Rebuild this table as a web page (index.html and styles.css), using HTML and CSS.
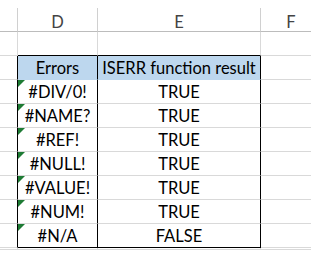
FILE: index.html
```html
<!DOCTYPE html>
<html>
<head>
<meta charset="utf-8">
<link rel="stylesheet" href="styles.css">
</head>
<body>
<div class="sheet">
  <div class="hdr corner"></div>
  <div class="hdr">D</div>
  <div class="hdr">E</div>
  <div class="hdr last">F</div>

  <div class="c"></div><div class="c tt"></div><div class="c tt"></div><div class="c"></div>

  <div class="c tl"></div><div class="c th">Errors</div><div class="c th te">ISERR function result</div><div class="c"></div>

  <div class="c tl"></div><div class="c td err">#DIV/0!</div><div class="c td te">TRUE</div><div class="c"></div>
  <div class="c tl"></div><div class="c td err">#NAME?</div><div class="c td te">TRUE</div><div class="c"></div>
  <div class="c tl"></div><div class="c td err">#REF!</div><div class="c td te">TRUE</div><div class="c"></div>
  <div class="c tl"></div><div class="c td err">#NULL!</div><div class="c td te">TRUE</div><div class="c"></div>
  <div class="c tl"></div><div class="c td err">#VALUE!</div><div class="c td te">TRUE</div><div class="c"></div>
  <div class="c tl"></div><div class="c td err">#NUM!</div><div class="c td te">TRUE</div><div class="c"></div>
  <div class="c tl"></div><div class="c td err bot">#N/A</div><div class="c td te bot">FALSE</div><div class="c"></div>

  <div class="c"></div><div class="c"></div><div class="c"></div><div class="c"></div>
</div>
</body>
</html>
```
FILE: styles.css
```css
* { box-sizing: border-box; }
html, body { margin: 0; padding: 0; background: #ffffff; }
body { width: 311px; height: 271px; overflow: hidden; font-family: "Lato", "Liberation Sans", sans-serif; }

.sheet {
  display: grid;
  grid-template-columns: 18px 80px 163px 60px;
  grid-template-rows: 32px repeat(9, 24px);
}

.hdr {
  margin-top: 8px;
  border-right: 1px solid #d0d0d0;
  border-bottom: 1px solid #bcbcbc;
  color: #444444;
  font-size: 16.5px;
  display: flex;
  align-items: center;
  justify-content: center;
  padding-top: 4px;
}
.hdr.last { border-right: none; }

.c {
  border-right: 1px solid #d9d9d9;
  border-bottom: 1px solid #d9d9d9;
  font-size: 16.5px;
  color: #000000;
  display: flex;
  align-items: center;
  justify-content: center;
  padding-top: 1px;
  white-space: nowrap;
  position: relative;
}

.tt { border-bottom-color: #000000; }
.tl { border-right-color: #000000; }
.th { background: #bdd7ee; border-bottom-color: #bdd7ee; border-right-color: #000000; }
.td { border-right-color: #000000; }
.bot { border-bottom-color: #000000; }

.err::before {
  content: "";
  position: absolute;
  left: 0;
  top: 0;
  width: 0;
  height: 0;
  border-top: 7px solid #1e7b34;
  border-right: 7px solid transparent;
}
```
